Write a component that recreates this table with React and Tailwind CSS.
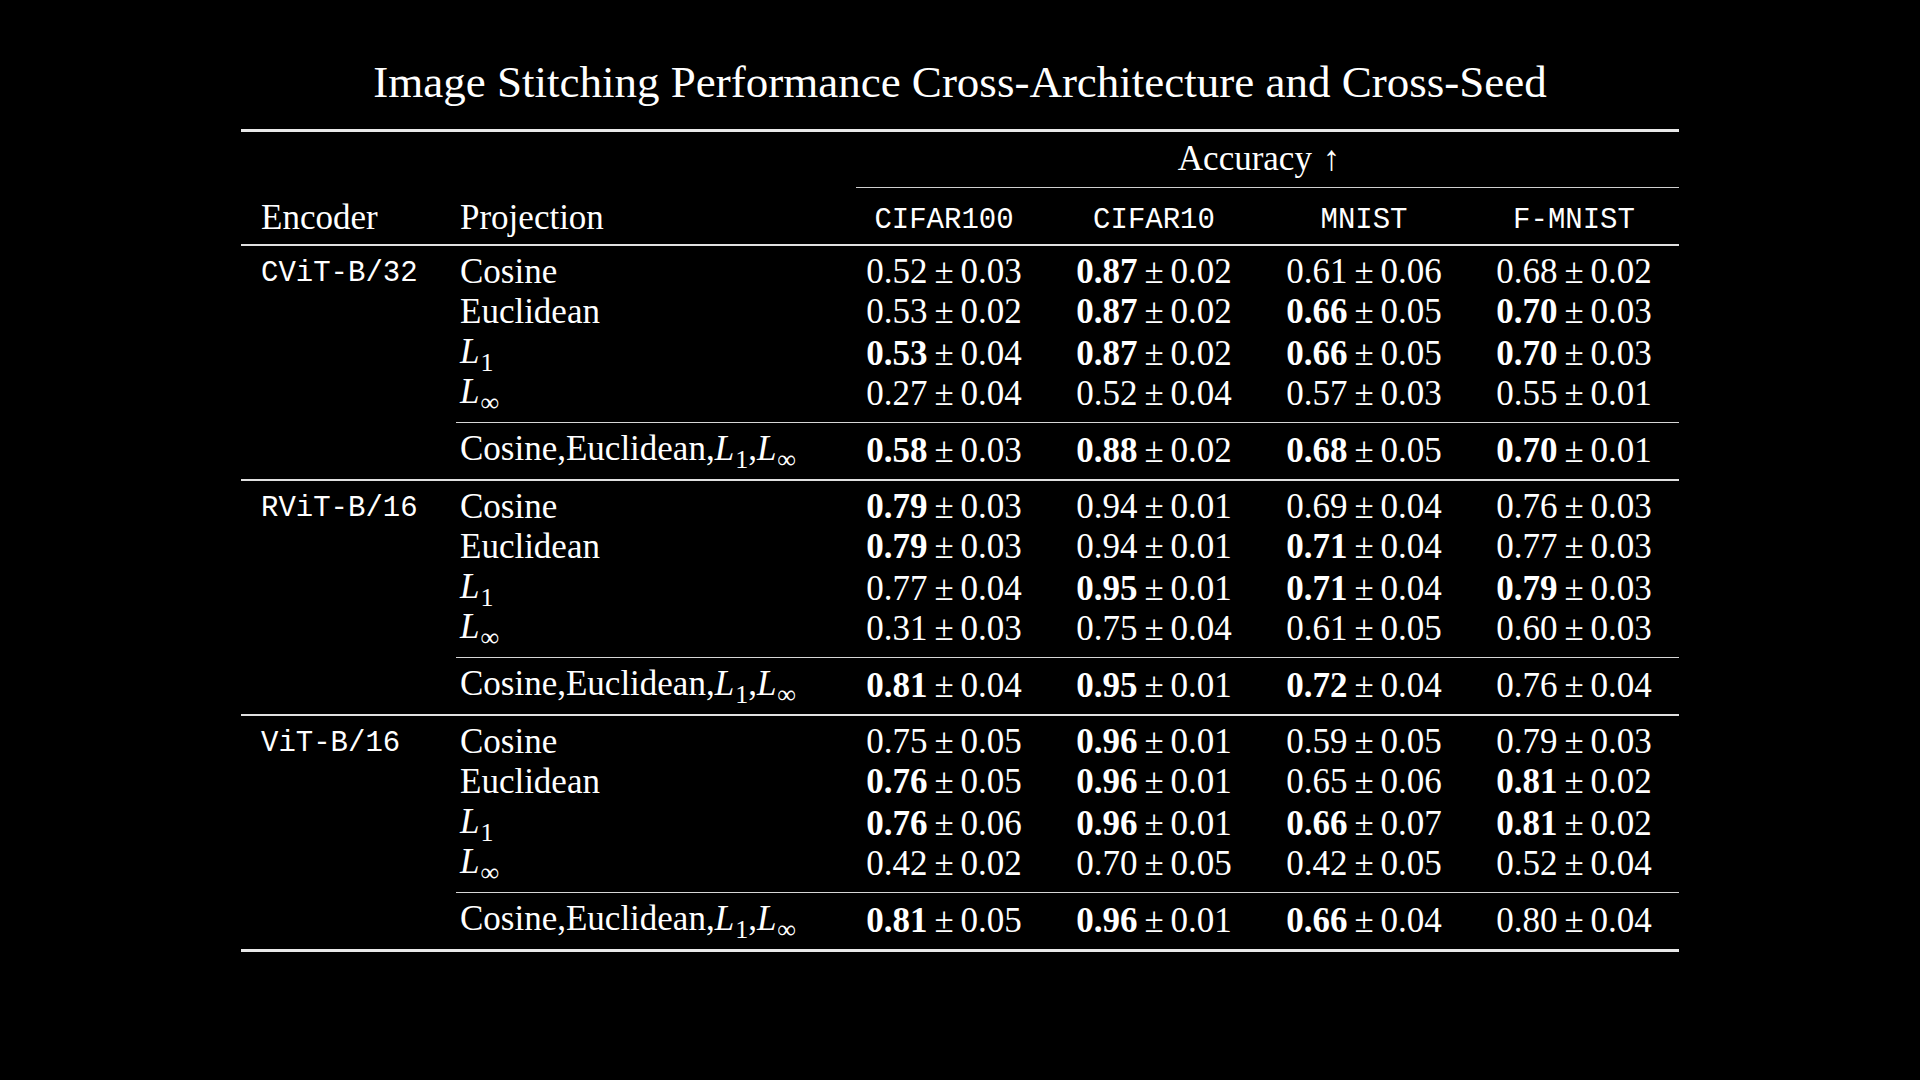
import React from 'react';

const SERIF = "font-['Liberation_Serif','Times_New_Roman',serif]";
const MONO = "font-['Liberation_Mono','DejaVu_Sans_Mono',monospace]";

const GROUPS = [
  {
    encoder: 'CViT-B/32',
    rows: [
      ['0.52 0.03', '*0.87 0.02', '0.61 0.06', '0.68 0.02'],
      ['0.53 0.02', '*0.87 0.02', '*0.66 0.05', '*0.70 0.03'],
      ['*0.53 0.04', '*0.87 0.02', '*0.66 0.05', '*0.70 0.03'],
      ['0.27 0.04', '0.52 0.04', '0.57 0.03', '0.55 0.01'],
    ],
    all: ['*0.58 0.03', '*0.88 0.02', '*0.68 0.05', '*0.70 0.01'],
  },
  {
    encoder: 'RViT-B/16',
    rows: [
      ['*0.79 0.03', '0.94 0.01', '0.69 0.04', '0.76 0.03'],
      ['*0.79 0.03', '0.94 0.01', '*0.71 0.04', '0.77 0.03'],
      ['0.77 0.04', '*0.95 0.01', '*0.71 0.04', '*0.79 0.03'],
      ['0.31 0.03', '0.75 0.04', '0.61 0.05', '0.60 0.03'],
    ],
    all: ['*0.81 0.04', '*0.95 0.01', '*0.72 0.04', '0.76 0.04'],
  },
  {
    encoder: 'ViT-B/16',
    rows: [
      ['0.75 0.05', '*0.96 0.01', '0.59 0.05', '0.79 0.03'],
      ['*0.76 0.05', '*0.96 0.01', '0.65 0.06', '*0.81 0.02'],
      ['*0.76 0.06', '*0.96 0.01', '*0.66 0.07', '*0.81 0.02'],
      ['0.42 0.02', '0.70 0.05', '0.42 0.05', '0.52 0.04'],
    ],
    all: ['*0.81 0.05', '*0.96 0.01', '*0.66 0.04', '0.80 0.04'],
  },
];

const DATASETS = ['CIFAR100', 'CIFAR10', 'MNIST', 'F-MNIST'];

function Norm({ sub }) {
  return (
    <span>
      <i>L</i>
      <span className="text-[26px] align-[-8px] leading-none ml-[1px]">{sub}</span>
    </span>
  );
}

const PROJECTIONS = [
  'Cosine',
  'Euclidean',
  <Norm key="l1" sub="1" />,
  <Norm key="linf" sub="∞" />,
];

function Value({ spec }) {
  const bold = spec.startsWith('*');
  const [mean, std] = spec.replace('*', '').split(' ');
  return (
    <span className="whitespace-nowrap">
      <span className={bold ? 'font-bold' : ''}>{mean}</span>
      <span className="mx-[7px]">±</span>
      <span>{std}</span>
    </span>
  );
}

function Row({ label, values }) {
  return (
    <div className="grid grid-cols-[399px_210px_210px_210px_210px] h-[40px] items-center">
      <div className="pl-[20px] whitespace-nowrap">{label}</div>
      {values.map((v, i) => (
        <div key={i} className="text-center">
          <Value spec={v} />
        </div>
      ))}
    </div>
  );
}

export default function App() {
  return (
    <div className={`w-full h-[1080px] bg-black text-white ${SERIF} overflow-hidden`}>
      {/* title */}
      <div className="pt-[56px] h-[129px] text-center text-[45px] leading-[52px]">
        Image Stitching Performance Cross-Architecture and Cross-Seed
      </div>

      <div className="w-[1438px] mx-auto text-[35px] leading-[40px]">
        {/* top rule */}
        <div className="h-[3px] bg-[#e8e8e8]" />

        {/* header */}
        <div className="pt-[7px] grid grid-cols-[598px_840px]">
          <div />
          <div className="h-[40px] text-center">
            Accuracy <span className="ml-[2px]">↑</span>
          </div>
        </div>
        <div className="grid grid-cols-[598px_840px] pt-[8px]">
          <div />
          <div className="h-[1px] bg-[#cfcfcf] ml-[17px]" />
        </div>
        <div className="pt-[7px] grid grid-cols-[199px_399px_210px_210px_210px_210px] h-[47px] items-center">
          <div className="pl-[20px]">Encoder</div>
          <div className="pl-[20px]">Projection</div>
          {DATASETS.map((d) => (
            <div key={d} className={`text-center text-[29px] pt-[6px] ${MONO}`}>
              {d}
            </div>
          ))}
        </div>
        <div className="h-[9px]" />
        <div className="h-[2px] bg-[#e0e0e0]" />

        {GROUPS.map((g, gi) => (
          <div key={g.encoder}>
            <div className="flex pt-[6px]">
              <div className={`w-[199px] pl-[20px] pt-[4px] h-[40px] flex items-center text-[29px] ${MONO}`}>
                {g.encoder}
              </div>
              <div className="flex-1">
                {g.rows.map((r, ri) => (
                  <Row key={ri} label={PROJECTIONS[ri]} values={r} />
                ))}
                <div className="h-[10px]" />
                <div className="h-[1px] bg-[#d6d6d6] ml-[16px]" />
                <div className="h-[6px]" />
                <Row
                  label={
                    <span>
                      Cosine,Euclidean,<Norm sub="1" />,<Norm sub="∞" />
                    </span>
                  }
                  values={g.all}
                />
                <div className="h-[10px]" />
              </div>
            </div>
            <div className={gi === GROUPS.length - 1 ? 'h-[3px] bg-[#e8e8e8]' : 'h-[2px] bg-[#e0e0e0]'} />
          </div>
        ))}
      </div>
    </div>
  );
}
